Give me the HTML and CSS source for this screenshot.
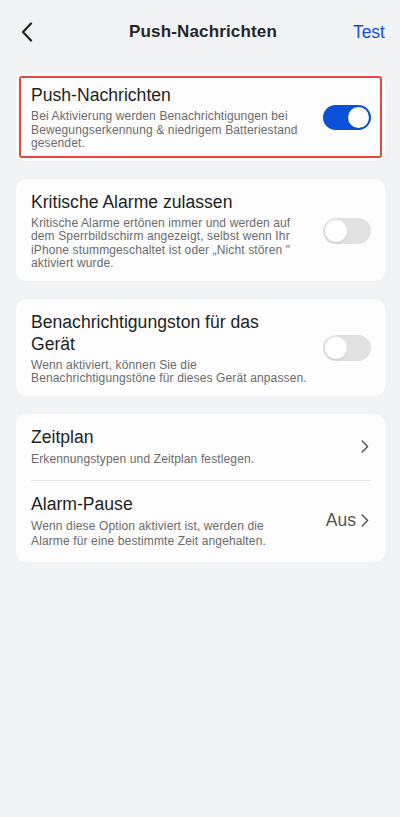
FILE: index.html
```html
<!DOCTYPE html>
<html lang="de">
<head>
<meta charset="utf-8">
<title>Push-Nachrichten</title>
<link rel="stylesheet" href="styles.css">
</head>
<body>
<header class="nav">
  <button class="nav__back" aria-label="Zurück">
    <svg width="12" height="20" viewBox="0 0 12 20"><path d="M10 1.5 L2 10 L10 18.5" fill="none" stroke="#222" stroke-width="2.2" stroke-linecap="round" stroke-linejoin="round"/></svg>
  </button>
  <h1 class="nav__title">Push-Nachrichten</h1>
  <a class="nav__action">Test</a>
</header>

<main class="list">
  <section class="card card--focus">
    <div class="row row--focus">
      <div class="row__text">
        <div class="row__title">Push-Nachrichten</div>
        <div class="row__desc">Bei Aktivierung werden Benachrichtigungen bei Bewegungserkennung &amp; niedrigem Batteriestand gesendet.</div>
      </div>
      <span class="toggle toggle--on"><span class="toggle__knob"></span></span>
    </div>
  </section>

  <section class="card">
    <div class="row">
      <div class="row__text">
        <div class="row__title">Kritische Alarme zulassen</div>
        <div class="row__desc">Kritische Alarme ertönen immer und werden auf dem Sperrbildschirm angezeigt, selbst wenn Ihr iPhone stummgeschaltet ist oder „Nicht stören " aktiviert wurde.</div>
      </div>
      <span class="toggle"><span class="toggle__knob"></span></span>
    </div>
  </section>

  <section class="card">
    <div class="row">
      <div class="row__text">
        <div class="row__title">Benachrichtigungston für das Gerät</div>
        <div class="row__desc">Wenn aktiviert, können Sie die Benachrichtigungstöne für dieses Gerät anpassen.</div>
      </div>
      <span class="toggle"><span class="toggle__knob"></span></span>
    </div>
  </section>

  <section class="card">
    <div class="row row--link">
      <div class="row__text">
        <div class="row__title">Zeitplan</div>
        <div class="row__desc">Erkennungstypen und Zeitplan festlegen.</div>
      </div>
      <span class="row__end">
        <svg class="chev" width="8" height="13" viewBox="0 0 8 13"><path d="M1.2 1 L6.6 6.5 L1.2 12" fill="none" stroke="#555" stroke-width="1.5" stroke-linecap="round" stroke-linejoin="round"/></svg>
      </span>
    </div>
    <div class="divider"></div>
    <div class="row row--link">
      <div class="row__text">
        <div class="row__title">Alarm-Pause</div>
        <div class="row__desc">Wenn diese Option aktiviert ist, werden die Alarme für eine bestimmte Zeit angehalten.</div>
      </div>
      <span class="row__end">
        <span class="row__value">Aus</span>
        <svg class="chev" width="8" height="13" viewBox="0 0 8 13"><path d="M1.2 1 L6.6 6.5 L1.2 12" fill="none" stroke="#555" stroke-width="1.5" stroke-linecap="round" stroke-linejoin="round"/></svg>
      </span>
    </div>
  </section>
</main>
</body>
</html>
```

FILE: styles.css
```css
* { box-sizing: border-box; }

html, body {
  margin: 0;
  padding: 0;
}

body {
  width: 400px;
  min-height: 817px;
  background: #f2f3f5;
  font-family: "Liberation Sans", Arial, sans-serif;
  color: #1f1f1f;
}

.nav {
  height: 64px;
  display: grid;
  grid-template-columns: 1fr auto 1fr;
  align-items: center;
  padding: 0 15px 0 21px;
}

.nav__back {
  justify-self: start;
  background: none;
  border: 0;
  padding: 0;
  display: flex;
  align-items: center;
  margin-top: -1px;
}

.nav__title {
  margin: 0;
  font-size: 17px;
  font-weight: 700;
  color: #262626;
  letter-spacing: 0.15px;
}

.nav__action {
  justify-self: end;
  font-size: 17.5px;
  font-weight: 500;
  color: #1450d9;
}

.list {
  display: flex;
  flex-direction: column;
  gap: 18px;
  padding: 9px 15px 0 16px;
}

.card {
  background: #fdfdfd;
  border-radius: 10px;
}

.card--focus {
  padding: 3px;
}

.row {
  display: flex;
  align-items: center;
  gap: 12px;
  padding: 12px 14px 10px 15px;
}

.row--focus {
  border: 2px solid #e8473e;
  border-radius: 3px;
  padding: 6px 9px 5px 10px;
}

.row--link {
  padding: 12px 16px 13px 15px;
  gap: 24px;
}

.row__text {
  flex: 1;
  min-width: 0;
  display: flex;
  flex-direction: column;
  gap: 4px;
}

.row__title {
  max-width: 274px;
  font-size: 17.6px;
  line-height: 22px;
  color: #1f1f1f;
}

.row__desc {
  font-size: 12px;
  line-height: 13.5px;
  letter-spacing: 0.13px;
  color: #6b6b6b;
}

.row--link .row__desc {
  line-height: 15px;
}

.toggle {
  flex: none;
  width: 48px;
  height: 26px;
  border-radius: 13px;
  background: #e2e2e2;
  position: relative;
}

.toggle__knob {
  position: absolute;
  top: 2px;
  left: 2px;
  width: 22px;
  height: 22px;
  border-radius: 50%;
  background: #fff;
  box-shadow: 0 1px 2px rgba(0, 0, 0, 0.12);
}

.toggle--on {
  height: 25px;
  background: #0a50d8;
}

.toggle--on .toggle__knob {
  left: auto;
  right: 2px;
  width: 21px;
  height: 21px;
}

.row__end {
  flex: none;
  display: flex;
  align-items: center;
  gap: 5px;
}

.row__value {
  font-size: 17.5px;
  color: #555;
}

.chev {
  display: block;
}

.divider {
  height: 1px;
  background: #e6e6e6;
  margin: 0 14px 0 15px;
}
```
